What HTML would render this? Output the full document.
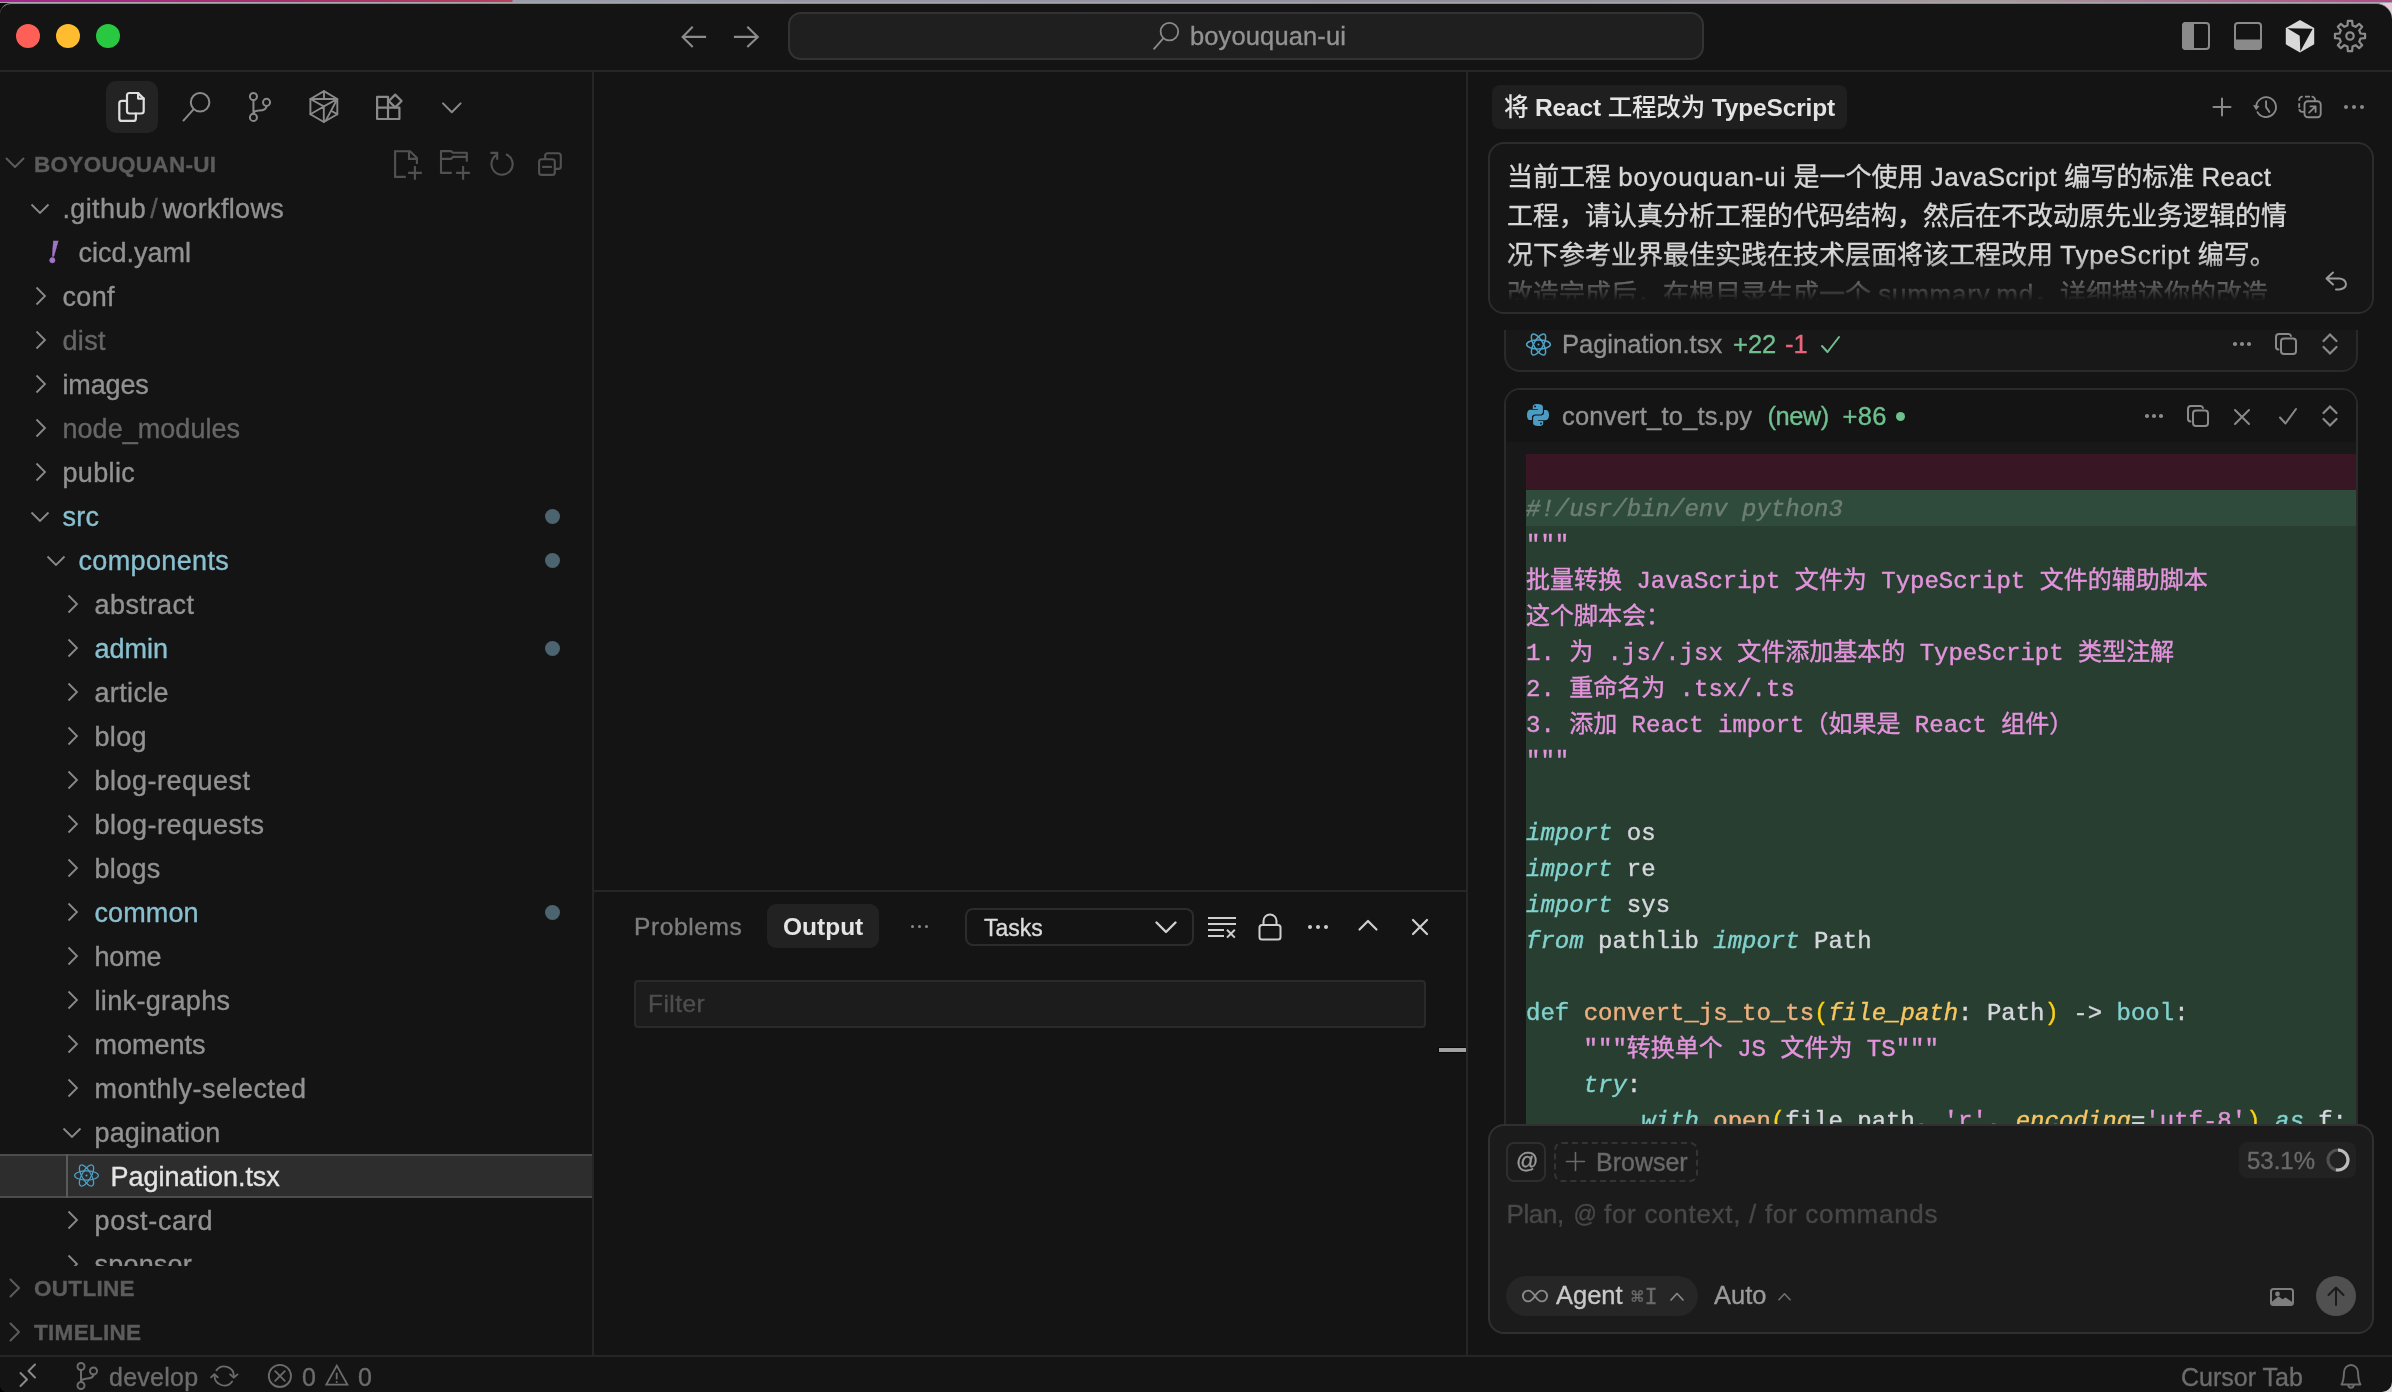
<!DOCTYPE html><html lang="zh"><head><meta charset="utf-8"><title>boyouquan-ui</title><style>
*{box-sizing:border-box;margin:0;padding:0}
html,body{width:2392px;height:1392px;overflow:hidden;background:#141414}
body{position:relative;font-family:"Liberation Sans","Noto Sans CJK SC",sans-serif;color:#9a9a9a;-webkit-font-smoothing:antialiased}
.a{position:absolute}
.t{position:absolute;white-space:pre;line-height:1;-webkit-text-stroke:0.35px}
.mono{font-family:"Liberation Mono","Noto Sans CJK SC",monospace}
svg{position:absolute;overflow:visible}
.row{position:absolute;left:0;width:592px;height:44px}
.cl{position:absolute;left:1526px;white-space:pre;font-family:"Liberation Mono","Noto Sans CJK SC",monospace;font-size:24px;line-height:36px;height:36px;color:#d6d6dd;-webkit-text-stroke:0.4px}
.k{color:#82d2ce;font-style:italic}
.kk{color:#82d2ce}
.s{color:#e394dc}
.f{color:#efb080}
.p{color:#f8c762;font-style:italic}
.y{color:#fbd118}
.c{color:#6d7f72;font-style:italic}
</style></head><body><div id="root" style="position:absolute;left:0;top:0;width:2392px;height:1392px;will-change:transform">
<div class="a" style="left:0px;top:0px;width:2392px;height:3px;background:linear-gradient(90deg,#a3278f 0,#a8306f 300px,#b5405e 512px,#9a9cb0 513px,#8e8e9c 1500px,#a89a9c 2000px,#b04a8a 2392px)"></div>
<div class="a" style="left:0px;top:2px;width:2392px;height:1.5px;background:#a6a6a8;"></div>
<div class="a" style="left:2360px;top:3px;width:32px;height:32px;background:#e6cadc;"></div>
<div class="a" style="left:0px;top:3px;width:40px;height:40px;background:#0c0c0c;"></div>
<div class="a" style="left:0px;top:3px;width:2392px;height:1389px;background:#141414;border-radius:11px 16px 0 0;border-top:1px solid #8a8a8a;border-left:0 solid #8a8a8a"></div>
<svg style="left:2382px;top:1382px" width="10" height="10" viewBox="0 0 10 10" stroke="none"><path d="M10 0 V10 H0 A10 10 0 0 0 10 0Z" fill="#d8d8d8"/></svg>
<svg style="left:0px;top:1386px" width="6" height="6" viewBox="0 0 6 6" stroke="none"><path d="M0 0 V6 H6 A6 6 0 0 1 0 0Z" fill="#000"/></svg>
<div class="a" style="left:0px;top:70px;width:2392px;height:2px;background:#262626;"></div>
<div class="a" style="left:16px;top:24px;width:24px;height:24px;background:#fe5f57;border-radius:50%"></div>
<div class="a" style="left:56px;top:24px;width:24px;height:24px;background:#febc2e;border-radius:50%"></div>
<div class="a" style="left:96px;top:24px;width:24px;height:24px;background:#28c840;border-radius:50%"></div>
<svg style="left:678px;top:22px" width="32" height="30" viewBox="678 22 32 30" fill="none" stroke="#8c8c8c" stroke-width="2.1" stroke-linecap="butt" stroke-linejoin="miter"><path d="M706.100 36.900H683.500M692.700 26.700L682.600 36.900L692.700 47.100"/></svg>
<svg style="left:730px;top:22px" width="32" height="30" viewBox="730 22 32 30" fill="none" stroke="#8c8c8c" stroke-width="2.1" stroke-linecap="butt" stroke-linejoin="miter"><path d="M733.900 36.900H756.900M747.300 26.700L757.800 36.900L747.300 47.100"/></svg>
<div class="a" style="left:788px;top:12px;width:916px;height:48px;background:#1f1f1f;border:2px solid #333;border-radius:13px"></div>
<svg style="left:1150px;top:18px" width="34" height="34" viewBox="1150 18 34 34" fill="none" stroke="#8a8a8a" stroke-width="1.8" stroke-linecap="round" stroke-linejoin="round" ><circle cx="1169.400" cy="31.600" r="8.800"/><path d="M1163.300 38.300L1153.600 49.300" stroke-linecap="butt"/></svg>
<span class="t " style="left:1190px;top:24.2px;font-size:25.5px;color:#929292;letter-spacing:0.12px">boyouquan-ui</span>
<svg style="left:2182px;top:22px" width="28" height="28" viewBox="0 0 28 28" fill="none" stroke="#8a8a8a" stroke-width="2" stroke-linecap="round" stroke-linejoin="round" ><rect x="1" y="1" width="26" height="26" rx="3"/><path d="M1 4a3 3 0 0 1 3-3h7v26H4a3 3 0 0 1-3-3z" fill="#8a8a8a"/></svg>
<svg style="left:2234px;top:22px" width="28" height="28" viewBox="0 0 28 28" fill="none" stroke="#8a8a8a" stroke-width="2" stroke-linecap="round" stroke-linejoin="round" ><rect x="1" y="1" width="26" height="26" rx="3"/><path d="M1 18.500h26v5.500a3 3 0 0 1-3 3H4a3 3 0 0 1-3-3z" fill="#8a8a8a"/></svg>
<svg style="left:2284px;top:18px" width="32" height="36" viewBox="2284 18 32 36" stroke="none"><path d="M2300 19.900L2314.200 28.100V44.300L2300 52.400L2285.800 44.300V28.100z" fill="#d8d8d8"/><path d="M2287.300 28.300L2312.700 28.700L2300.300 51.500L2299.700 35.700z" fill="#141414"/></svg>
<svg style="left:2334px;top:20px" width="32" height="32" viewBox="0 0 32 32" fill="none" stroke="#8c8c8c" stroke-width="2.2" stroke-linecap="round" stroke-linejoin="round" ><path d="M26.50 13.48 L31.05 13.86 L31.05 18.14 L26.50 18.52 L25.21 21.64 L28.16 25.13 L25.13 28.16 L21.64 25.21 L18.52 26.50 L18.14 31.05 L13.86 31.05 L13.48 26.50 L10.36 25.21 L6.87 28.16 L3.84 25.13 L6.79 21.64 L5.50 18.52 L0.95 18.14 L0.95 13.86 L5.50 13.48 L6.79 10.36 L3.84 6.87 L6.87 3.84 L10.36 6.79 L13.48 5.50 L13.86 0.95 L18.14 0.95 L18.52 5.50 L21.64 6.79 L25.13 3.84 L28.16 6.87 L25.21 10.36Z"/><circle cx="16" cy="16" r="3.700"/></svg>
<div class="a" style="left:592px;top:72px;width:2px;height:1284px;background:#262626;"></div>
<div class="a" style="left:106px;top:81px;width:52px;height:52px;background:#232323;border-radius:10px"></div>
<svg style="left:116px;top:90px" width="32" height="34" viewBox="116 90 32 34" fill="none" stroke="#dedede" stroke-width="2.2" stroke-linecap="round" stroke-linejoin="round" ><path d="M129.500 93H138.100L143.700 98.600V111a2.500 2.500 0 0 1-2.500 2.500H129.500a2.500 2.500 0 0 1-2.500-2.500V95.500a2.500 2.500 0 0 1 2.500-2.500z"/><path d="M138.100 93V98.600H143.700"/><path d="M127 100.800H121.800a2.500 2.500 0 0 0-2.500 2.500V118.400a2.500 2.500 0 0 0 2.500 2.500H133.350a2.500 2.500 0 0 0 2.500-2.500V113.500"/></svg>
<svg style="left:180px;top:90px" width="34" height="34" viewBox="180 90 34 34" fill="none" stroke="#8a8a8a" stroke-width="2" stroke-linecap="round" stroke-linejoin="round" ><circle cx="200.100" cy="102.300" r="9.300"/><path d="M193.500 109.400L183 121.200" stroke-linecap="butt"/></svg>
<svg style="left:246px;top:90px" width="28" height="34" viewBox="246 90 28 34" fill="none" stroke="#8a8a8a" stroke-width="2" stroke-linecap="round" stroke-linejoin="round" ><circle cx="253.450" cy="96.500" r="3.550"/><circle cx="253.450" cy="117.400" r="3.550"/><circle cx="266.550" cy="102.350" r="3.550"/><path d="M253.450 100V113.800M266.550 105.900c0 4-4 4.500-7.500 4.600c-3.200 .1-5.500 1.200-5.600 3.300"/></svg>
<svg style="left:308px;top:88px" width="32" height="36" viewBox="308 88 32 36" fill="none" stroke="#8a8a8a" stroke-width="1.9" stroke-linecap="round" stroke-linejoin="round" ><path d="M323.950 91.100L337.300 99V114.200L323.800 122L310.400 114.200V99z"/><path d="M310.400 99H337.300M323.950 91.100V99M310.400 99L323.800 106.450L337.300 99M323.800 106.450V122M323.800 106.450L310.400 114.200M337.300 99L325.800 120.600M331.050 110.760L337.300 114.200"/></svg>
<svg style="left:374px;top:92px" width="30" height="30" viewBox="374 92 30 30" fill="none" stroke="#8a8a8a" stroke-width="2.2" stroke-linecap="round" stroke-linejoin="round" ><path d="M377.100 96.900H388V119H377.100z"/><path d="M377.100 107.700H399.400V119H388"/><path d="M395.200 94.600L401.600 101L395.200 107.400L388.800 101z"/></svg>
<svg style="left:440px;top:100px" width="24" height="16" viewBox="440 100 24 16" fill="none" stroke="#8a8a8a" stroke-width="2" stroke-linecap="round" stroke-linejoin="round" ><path d="M443 103.400L451.800 112.200L460.600 103.400"/></svg>
<svg style="left:5px;top:156px" width="20" height="14" viewBox="0 0 20 14" fill="none" stroke="#5c5c5c" stroke-width="2" stroke-linecap="round" stroke-linejoin="round" ><path d="M1.500 2.500L10 11 18.500 2.500"/></svg>
<span class="t " style="left:34px;top:153.8px;font-size:22.5px;color:#5c5c5c;font-weight:700;letter-spacing:0.3px">BOYOUQUAN-UI</span>
<svg style="left:392px;top:148px" width="32" height="34" viewBox="392 148 32 34" fill="none" stroke="#515151" stroke-width="2.1" stroke-linecap="butt" stroke-linejoin="miter"><path d="M405.800 176.900H395.100V151.200H410.100L416.900 157.900V163.900M409 151.200V158.900H416.900M414.900 166.100V179.700M408.100 172.900H421.900"/></svg>
<svg style="left:438px;top:148px" width="34" height="34" viewBox="438 148 34 34" fill="none" stroke="#515151" stroke-width="2.1" stroke-linejoin="round" stroke-linecap="butt"><path d="M451.800 172.900H441V151.100H451L453.200 152.800H466.800V161.800M466.800 156.900H453.200L451 158.900H441M463.100 166.100V179.700M456.100 172.900H469.900"/></svg>
<svg style="left:488px;top:150px" width="28" height="28" viewBox="488 150 28 28" fill="none" stroke="#515151" stroke-width="2.1" stroke-linecap="butt" stroke-linejoin="miter"><path d="M497 154.750A10.600 10.600 0 1 0 506 154.250"/><path d="M490.400 152.900H497.200V159.700"/></svg>
<svg style="left:536px;top:150px" width="28" height="28" viewBox="536 150 28 28" fill="none" stroke="#515151" stroke-width="2.1" stroke-linejoin="round" stroke-linecap="butt"><rect x="539.100" y="159.300" width="15.700" height="15.600" rx="2.500"/><path d="M542.100 166.900H551.900"/><path d="M545.200 159.300V155.700a2.500 2.500 0 0 1 2.500-2.500H558.300a2.500 2.500 0 0 1 2.500 2.500V166.400a2.500 2.500 0 0 1-2.500 2.500H554.800"/></svg>
<div class="a" style="left:0;top:186px;width:592px;height:1080px;overflow:hidden">
<svg style="left:30px;top:17px" width="20" height="12" viewBox="0 0 20 12" fill="none" stroke="#8a8a8a" stroke-width="1.8" stroke-linecap="butt" stroke-linejoin="miter"><path d="M1.500 1.500L10 10 18.500 1.500"/></svg>
<span class="t " style="left:62.5px;top:9.5px;font-size:27px;color:#929292;letter-spacing:0.35px">.github<span style="color:#5c5c5c;padding:0 4.3px">/</span>workflows</span>
<span class="t " style="left:47px;top:49.0px;font-size:34px;color:#a074c4;font-weight:700;font-style:italic;font-family:'Liberation Serif',serif">!</span>
<span class="t " style="left:78.5px;top:53.5px;font-size:27px;color:#929292;letter-spacing:0px">cicd.yaml</span>
<svg style="left:35px;top:100px" width="12" height="20" viewBox="0 0 12 20" fill="none" stroke="#8a8a8a" stroke-width="1.8" stroke-linecap="butt" stroke-linejoin="miter"><path d="M1.500 1.500L10 10 1.500 18.500"/></svg>
<span class="t " style="left:62.5px;top:97.5px;font-size:27px;color:#929292;letter-spacing:0.35px">conf</span>
<svg style="left:35px;top:144px" width="12" height="20" viewBox="0 0 12 20" fill="none" stroke="#8a8a8a" stroke-width="1.8" stroke-linecap="butt" stroke-linejoin="miter"><path d="M1.500 1.500L10 10 1.500 18.500"/></svg>
<span class="t " style="left:62.5px;top:141.5px;font-size:27px;color:#666666;letter-spacing:0.35px">dist</span>
<svg style="left:35px;top:188px" width="12" height="20" viewBox="0 0 12 20" fill="none" stroke="#8a8a8a" stroke-width="1.8" stroke-linecap="butt" stroke-linejoin="miter"><path d="M1.500 1.500L10 10 1.500 18.500"/></svg>
<span class="t " style="left:62.5px;top:185.5px;font-size:27px;color:#929292;letter-spacing:-0.15px">images</span>
<svg style="left:35px;top:232px" width="12" height="20" viewBox="0 0 12 20" fill="none" stroke="#8a8a8a" stroke-width="1.8" stroke-linecap="butt" stroke-linejoin="miter"><path d="M1.500 1.500L10 10 1.500 18.500"/></svg>
<span class="t " style="left:62.5px;top:229.5px;font-size:27px;color:#666666;letter-spacing:0.04px">node_modules</span>
<svg style="left:35px;top:276px" width="12" height="20" viewBox="0 0 12 20" fill="none" stroke="#8a8a8a" stroke-width="1.8" stroke-linecap="butt" stroke-linejoin="miter"><path d="M1.500 1.500L10 10 1.500 18.500"/></svg>
<span class="t " style="left:62.5px;top:273.5px;font-size:27px;color:#929292;letter-spacing:0.35px">public</span>
<svg style="left:30px;top:325px" width="20" height="12" viewBox="0 0 20 12" fill="none" stroke="#8a8a8a" stroke-width="1.8" stroke-linecap="butt" stroke-linejoin="miter"><path d="M1.500 1.500L10 10 18.500 1.500"/></svg>
<span class="t " style="left:62.5px;top:317.5px;font-size:27px;color:#88c0d0;letter-spacing:0.2px">src</span>
<div class="a" style="left:544.5px;top:323px;width:15px;height:15px;background:#4c6470;border-radius:50%"></div>
<svg style="left:46px;top:369px" width="20" height="12" viewBox="0 0 20 12" fill="none" stroke="#8a8a8a" stroke-width="1.8" stroke-linecap="butt" stroke-linejoin="miter"><path d="M1.500 1.500L10 10 18.500 1.500"/></svg>
<span class="t " style="left:78.5px;top:361.5px;font-size:27px;color:#88c0d0;letter-spacing:0.35px">components</span>
<div class="a" style="left:544.5px;top:367px;width:15px;height:15px;background:#4c6470;border-radius:50%"></div>
<svg style="left:67px;top:408px" width="12" height="20" viewBox="0 0 12 20" fill="none" stroke="#8a8a8a" stroke-width="1.8" stroke-linecap="butt" stroke-linejoin="miter"><path d="M1.500 1.500L10 10 1.500 18.500"/></svg>
<span class="t " style="left:94.5px;top:405.5px;font-size:27px;color:#929292;letter-spacing:0.5px">abstract</span>
<svg style="left:67px;top:452px" width="12" height="20" viewBox="0 0 12 20" fill="none" stroke="#8a8a8a" stroke-width="1.8" stroke-linecap="butt" stroke-linejoin="miter"><path d="M1.500 1.500L10 10 1.500 18.500"/></svg>
<span class="t " style="left:94.5px;top:449.5px;font-size:27px;color:#88c0d0;letter-spacing:0px">admin</span>
<div class="a" style="left:544.5px;top:455px;width:15px;height:15px;background:#4c6470;border-radius:50%"></div>
<svg style="left:67px;top:496px" width="12" height="20" viewBox="0 0 12 20" fill="none" stroke="#8a8a8a" stroke-width="1.8" stroke-linecap="butt" stroke-linejoin="miter"><path d="M1.500 1.500L10 10 1.500 18.500"/></svg>
<span class="t " style="left:94.5px;top:493.5px;font-size:27px;color:#929292;letter-spacing:0.35px">article</span>
<svg style="left:67px;top:540px" width="12" height="20" viewBox="0 0 12 20" fill="none" stroke="#8a8a8a" stroke-width="1.8" stroke-linecap="butt" stroke-linejoin="miter"><path d="M1.500 1.500L10 10 1.500 18.500"/></svg>
<span class="t " style="left:94.5px;top:537.5px;font-size:27px;color:#929292;letter-spacing:0.35px">blog</span>
<svg style="left:67px;top:584px" width="12" height="20" viewBox="0 0 12 20" fill="none" stroke="#8a8a8a" stroke-width="1.8" stroke-linecap="butt" stroke-linejoin="miter"><path d="M1.500 1.500L10 10 1.500 18.500"/></svg>
<span class="t " style="left:94.5px;top:581.5px;font-size:27px;color:#929292;letter-spacing:0.5px">blog-request</span>
<svg style="left:67px;top:628px" width="12" height="20" viewBox="0 0 12 20" fill="none" stroke="#8a8a8a" stroke-width="1.8" stroke-linecap="butt" stroke-linejoin="miter"><path d="M1.500 1.500L10 10 1.500 18.500"/></svg>
<span class="t " style="left:94.5px;top:625.5px;font-size:27px;color:#929292;letter-spacing:0.5px">blog-requests</span>
<svg style="left:67px;top:672px" width="12" height="20" viewBox="0 0 12 20" fill="none" stroke="#8a8a8a" stroke-width="1.8" stroke-linecap="butt" stroke-linejoin="miter"><path d="M1.500 1.500L10 10 1.500 18.500"/></svg>
<span class="t " style="left:94.5px;top:669.5px;font-size:27px;color:#929292;letter-spacing:0.3px">blogs</span>
<svg style="left:67px;top:716px" width="12" height="20" viewBox="0 0 12 20" fill="none" stroke="#8a8a8a" stroke-width="1.8" stroke-linecap="butt" stroke-linejoin="miter"><path d="M1.500 1.500L10 10 1.500 18.500"/></svg>
<span class="t " style="left:94.5px;top:713.5px;font-size:27px;color:#88c0d0;letter-spacing:0.1px">common</span>
<div class="a" style="left:544.5px;top:719px;width:15px;height:15px;background:#4c6470;border-radius:50%"></div>
<svg style="left:67px;top:760px" width="12" height="20" viewBox="0 0 12 20" fill="none" stroke="#8a8a8a" stroke-width="1.8" stroke-linecap="butt" stroke-linejoin="miter"><path d="M1.500 1.500L10 10 1.500 18.500"/></svg>
<span class="t " style="left:94.5px;top:757.5px;font-size:27px;color:#929292;letter-spacing:-0.18px">home</span>
<svg style="left:67px;top:804px" width="12" height="20" viewBox="0 0 12 20" fill="none" stroke="#8a8a8a" stroke-width="1.8" stroke-linecap="butt" stroke-linejoin="miter"><path d="M1.500 1.500L10 10 1.500 18.500"/></svg>
<span class="t " style="left:94.5px;top:801.5px;font-size:27px;color:#929292;letter-spacing:0.35px">link-graphs</span>
<svg style="left:67px;top:848px" width="12" height="20" viewBox="0 0 12 20" fill="none" stroke="#8a8a8a" stroke-width="1.8" stroke-linecap="butt" stroke-linejoin="miter"><path d="M1.500 1.500L10 10 1.500 18.500"/></svg>
<span class="t " style="left:94.5px;top:845.5px;font-size:27px;color:#929292;letter-spacing:0px">moments</span>
<svg style="left:67px;top:892px" width="12" height="20" viewBox="0 0 12 20" fill="none" stroke="#8a8a8a" stroke-width="1.8" stroke-linecap="butt" stroke-linejoin="miter"><path d="M1.500 1.500L10 10 1.500 18.500"/></svg>
<span class="t " style="left:94.5px;top:889.5px;font-size:27px;color:#929292;letter-spacing:0.5px">monthly-selected</span>
<svg style="left:62px;top:941px" width="20" height="12" viewBox="0 0 20 12" fill="none" stroke="#8a8a8a" stroke-width="1.8" stroke-linecap="butt" stroke-linejoin="miter"><path d="M1.500 1.500L10 10 18.500 1.500"/></svg>
<span class="t " style="left:94.5px;top:933.5px;font-size:27px;color:#929292;letter-spacing:0.14px">pagination</span>
<div class="a" style="left:0px;top:968px;width:592px;height:44px;background:#2d2d2d;border-top:2px solid #4c4c4c;border-bottom:2px solid #4c4c4c"></div>
<div class="a" style="left:66px;top:968px;width:2px;height:44px;background:#5a5a5a;"></div>
<svg style="left:73.5px;top:977px" width="25" height="25" viewBox="-12 -12 24 24" fill="none" stroke="#4ba3c9" stroke-width="1.2"><ellipse rx="11.4" ry="4.4"/><ellipse rx="11.4" ry="4.4" transform="rotate(60)"/><ellipse rx="11.4" ry="4.4" transform="rotate(120)"/><circle r="1" fill="#4ba3c9" stroke="none"/></svg>
<span class="t " style="left:110.5px;top:977.5px;font-size:27px;color:#e4e4e4;letter-spacing:-0.02px">Pagination.tsx</span>
<svg style="left:67px;top:1024px" width="12" height="20" viewBox="0 0 12 20" fill="none" stroke="#8a8a8a" stroke-width="1.8" stroke-linecap="butt" stroke-linejoin="miter"><path d="M1.500 1.500L10 10 1.500 18.500"/></svg>
<span class="t " style="left:94.5px;top:1021.5px;font-size:27px;color:#929292;letter-spacing:0.68px">post-card</span>
<svg style="left:67px;top:1068px" width="12" height="20" viewBox="0 0 12 20" fill="none" stroke="#8a8a8a" stroke-width="1.8" stroke-linecap="butt" stroke-linejoin="miter"><path d="M1.500 1.500L10 10 1.500 18.500"/></svg>
<span class="t " style="left:94.5px;top:1065.5px;font-size:27px;color:#929292;letter-spacing:0.2px">sponsor</span>
</div>
<svg style="left:9px;top:1278px" width="12" height="20" viewBox="0 0 12 20" fill="none" stroke="#5c5c5c" stroke-width="2" stroke-linecap="round" stroke-linejoin="round" ><path d="M1.500 1.500L10 10 1.500 18.500"/></svg>
<span class="t " style="left:34px;top:1277.8px;font-size:22.5px;color:#5c5c5c;font-weight:700;letter-spacing:0.3px">OUTLINE</span>
<svg style="left:9px;top:1322px" width="12" height="20" viewBox="0 0 12 20" fill="none" stroke="#5c5c5c" stroke-width="2" stroke-linecap="round" stroke-linejoin="round" ><path d="M1.500 1.500L10 10 1.500 18.500"/></svg>
<span class="t " style="left:34px;top:1321.8px;font-size:22.5px;color:#5c5c5c;font-weight:700;letter-spacing:0.3px">TIMELINE</span>
<div class="a" style="left:0px;top:1355px;width:2392px;height:2px;background:#262626;"></div>
<svg style="left:19px;top:1363px" width="18" height="25" viewBox="0 0 18 25" fill="none" stroke="#8a8a8a" stroke-width="2" stroke-linecap="round" stroke-linejoin="round" ><path d="M8 1.500L16.500 1.500" stroke="none"/><path d="M16 1.500L9.500 8 16 14.500M1.500 10L8 16.500 1.500 23"/></svg>
<svg style="left:76px;top:1362px" width="22" height="28" viewBox="0 0 22 28" fill="none" stroke="#6c6c6c" stroke-width="2" stroke-linecap="round" stroke-linejoin="round" ><circle cx="5" cy="4.500" r="3.500"/><circle cx="5" cy="23.500" r="3.500"/><circle cx="17.500" cy="9" r="3.500"/><path d="M5 8V20M17.500 12.500c0 4-5 4-9 4.500-2.500 .3-3.500 1.500-3.500 3"/></svg>
<span class="t " style="left:109px;top:1364.5px;font-size:25px;color:#6c6c6c;letter-spacing:0.25px">develop</span>
<svg style="left:208px;top:1362px" width="32" height="28" viewBox="208 1362 32 28" fill="none" stroke="#6c6c6c" stroke-width="1.8" stroke-linecap="round" stroke-linejoin="round" ><path d="M216.400 1370.400A9.700 9.700 0 0 1 233.900 1376M232.100 1381.400A9.700 9.700 0 0 1 214.500 1375.800"/><path d="M230.100 1374.400L233.800 1377.700L237.500 1374.400M211 1377.400L214.400 1374.100L217.800 1377.400"/></svg>
<svg style="left:266px;top:1362px" width="28" height="28" viewBox="266 1362 28 28" fill="none" stroke="#6c6c6c" stroke-width="1.8" stroke-linecap="round" stroke-linejoin="round" ><circle cx="279.900" cy="1375.900" r="11.100"/><path d="M275.200 1371.100L284.800 1380.900M284.800 1371.100L275.200 1380.900"/></svg>
<span class="t " style="left:302px;top:1364.5px;font-size:25px;color:#6c6c6c;">0</span>
<svg style="left:322px;top:1362px" width="30" height="26" viewBox="322 1362 30 26" fill="none" stroke="#6c6c6c" stroke-width="1.8" stroke-linecap="round" stroke-linejoin="round" ><path d="M336.800 1365.600L347.400 1384.600H326.300z" stroke-linejoin="miter"/><path d="M336.700 1372.700V1379.400" stroke-linecap="butt"/><circle cx="336.700" cy="1382" r="1" fill="#6c6c6c" stroke="none"/></svg>
<span class="t " style="left:358px;top:1364.5px;font-size:25px;color:#6c6c6c;">0</span>
<span class="t " style="left:2181px;top:1364.5px;font-size:25px;color:#6c6c6c;">Cursor Tab</span>
<svg style="left:2340px;top:1363px" width="22" height="27" viewBox="0 0 22 27" fill="none" stroke="#6c6c6c" stroke-width="1.9" stroke-linecap="round" stroke-linejoin="round" ><path d="M1.500 21.500c2-3 2.300-7 2.500-12a7 7.500 0 0 1 14 0c.2 5 .5 9 2.500 12z"/><path d="M8.300 22a2.700 2.700 0 0 0 5.400 0"/></svg>
<div class="a" style="left:594px;top:890px;width:872px;height:2px;background:#262626;"></div>
<span class="t " style="left:634px;top:914.8px;font-size:24.5px;color:#7e7e7e;letter-spacing:0.6px">Problems</span>
<div class="a" style="left:767px;top:904px;width:112px;height:44px;background:#222;border-radius:9px"></div>
<span class="t " style="left:783px;top:914.8px;font-size:24.5px;color:#e4e4e4;font-weight:700;-webkit-text-stroke:0">Output</span>
<div class="a" style="left:911px;top:925px;width:3px;height:3px;background:#8a8a8a;border-radius:50%"></div>
<div class="a" style="left:918px;top:925px;width:3px;height:3px;background:#8a8a8a;border-radius:50%"></div>
<div class="a" style="left:925px;top:925px;width:3px;height:3px;background:#8a8a8a;border-radius:50%"></div>
<div class="a" style="left:965px;top:908px;width:229px;height:38px;background:#141414;border:2px solid #2c2c2c;border-radius:8px"></div>
<span class="t " style="left:984px;top:916.5px;font-size:23px;color:#dcdcdc;">Tasks</span>
<svg style="left:1155px;top:921px" width="22" height="13" viewBox="0 0 22 13" fill="none" stroke="#cfcfcf" stroke-width="2.4" stroke-linecap="round" stroke-linejoin="round" ><path d="M1.500 1.500L11 11 20.500 1.500"/></svg>
<svg style="left:1206px;top:914px" width="32" height="26" viewBox="1206 914 32 26" fill="none" stroke="#cfcfcf" stroke-width="2" stroke-linecap="round" stroke-linejoin="round" ><path d="M1208 918.100H1236M1208 924H1236M1208 930H1224M1208 936H1224M1227 929.800L1234.800 937.600M1234.800 929.800L1227 937.600" stroke-linecap="butt"/></svg>
<svg style="left:1258px;top:913px" width="24" height="28" viewBox="0 0 24 28" fill="none" stroke="#cfcfcf" stroke-width="2" stroke-linecap="round" stroke-linejoin="round" ><rect x="1.500" y="12" width="21" height="14.500" rx="2.500"/><path d="M5.500 12V8a6.500 6.500 0 0 1 13 0V12"/></svg>
<div class="a" style="left:1308.3px;top:925.3px;width:4px;height:4px;background:#cfcfcf;border-radius:50%"></div>
<div class="a" style="left:1316.3px;top:925.3px;width:4px;height:4px;background:#cfcfcf;border-radius:50%"></div>
<div class="a" style="left:1324.3px;top:925.3px;width:4px;height:4px;background:#cfcfcf;border-radius:50%"></div>
<svg style="left:1358px;top:919px" width="20" height="12" viewBox="0 0 20 12" fill="none" stroke="#cfcfcf" stroke-width="2.2" stroke-linecap="round" stroke-linejoin="round" ><path d="M1.500 10.500L10 2 18.500 10.500"/></svg>
<svg style="left:1412px;top:919px" width="16" height="16" viewBox="0 0 16 16" fill="none" stroke="#cfcfcf" stroke-width="2.2" stroke-linecap="round" stroke-linejoin="round" ><path d="M1 1L15 15M15 1L1 15"/></svg>
<div class="a" style="left:634px;top:980px;width:792px;height:48px;background:#1c1c1c;border:2px solid #2a2a2a;border-radius:4px"></div>
<span class="t " style="left:648px;top:992.2px;font-size:24.5px;color:#4e4e4e;letter-spacing:0.45px">Filter</span>
<div class="a" style="left:1439px;top:1048px;width:27px;height:4px;background:#a2a2a2;box-shadow:0 0 0 1px #070707"></div>
<div class="a" style="left:1466px;top:72px;width:2px;height:1284px;background:#262626;"></div>
<div class="a" style="left:1492px;top:85px;width:355px;height:44px;background:#1f1f1f;border-radius:8px"></div>
<span class="t " style="left:1504px;top:95.8px;font-size:24.5px;color:#e4e4e4;font-weight:700;-webkit-text-stroke:0;letter-spacing:-0.15px"><span style="font-weight:500">将</span> React <span style="font-weight:500">工程改为</span> TypeScript</span>
<svg style="left:2213px;top:98px" width="18" height="18" viewBox="0 0 18 18" fill="none" stroke="#8a8a8a" stroke-width="2" stroke-linecap="round" stroke-linejoin="round" ><path d="M9 0.500V17.500M0.500 9H17.500"/></svg>
<svg style="left:2250px;top:94px" width="30" height="28" viewBox="2250 94 30 28" fill="none" stroke="#8a8a8a" stroke-width="1.85" stroke-linecap="round" stroke-linejoin="round" ><path d="M2256.310 105.290A9.930 9.930 0 1 1 2257.480 112.110"/><path d="M2253 105.100L2259.500 105.900L2256.100 110.300z" fill="#8a8a8a" stroke="none"/><path d="M2266.070 101.250V107.130L2269.400 111.900"/></svg>
<svg style="left:2296px;top:92px" width="28" height="28" viewBox="2296 92 28 28" fill="none" stroke="#8a8a8a" stroke-width="1.85" stroke-linecap="round" stroke-linejoin="round" ><path d="M2315 101.100V99.900a3.300 3.300 0 0 0-3.300-3.300H2302.500a3.300 3.300 0 0 0-3.300 3.300V108.600a3.300 3.300 0 0 0 3.300 3.300H2304.500" stroke-dasharray="6.400 1.500 5.100 2.200 6.100 2.600 4.400 1.500 7.200" stroke-linecap="butt"/><rect x="2304.500" y="101.200" width="16.200" height="16" rx="3.300"/><path d="M2309.100 112.600L2315.400 106.600M2310.400 106.400H2315.600V111.900"/></svg>
<div class="a" style="left:2343.8px;top:104.8px;width:4.5px;height:4.5px;background:#8a8a8a;border-radius:50%"></div>
<div class="a" style="left:2351.8px;top:104.8px;width:4.5px;height:4.5px;background:#8a8a8a;border-radius:50%"></div>
<div class="a" style="left:2359.8px;top:104.8px;width:4.5px;height:4.5px;background:#8a8a8a;border-radius:50%"></div>
<div class="a" style="left:1488px;top:142px;width:886px;height:172px;background:#161616;border:2px solid #2c2c2c;border-radius:16px;overflow:hidden">
<span class="t" style="left:17px;top:19.6px;font-size:26px;color:#d8d8d8">当前工程 <span style="letter-spacing:0.88px">boyouquan-ui</span> 是一个使用 <span style="letter-spacing:0.47px">JavaScript</span> 编写的标准 <span style="letter-spacing:0.4px">React</span></span>
<span class="t" style="left:17px;top:58.7px;font-size:26px;color:#d8d8d8">工程，请认真分析工程的代码结构，然后在不改动原先业务逻辑的情</span>
<span class="t" style="left:17px;top:97.8px;font-size:26px;color:#d8d8d8">况下参考业界最佳实践在技术层面将该工程改用 <span style="letter-spacing:0.74px">TypeScript</span> 编写。</span>
<span class="t" style="left:17px;top:136.9px;font-size:26px;color:#d8d8d8">改造完成后，在根目录生成一个 <span style="letter-spacing:0.74px">summary.md</span>，详细描述你的改造</span>
<div class="a" style="left:0;top:111px;width:882px;height:57px;background:linear-gradient(180deg,rgba(22,22,22,0) 0,rgba(22,22,22,.55) 45%,#161616 80%)"></div>
</div>
<svg style="left:2325px;top:271px" width="23" height="20" viewBox="0 0 23 20" fill="none" stroke="#9a9a9a" stroke-width="2" stroke-linecap="round" stroke-linejoin="round" ><path d="M8 1.500L1.500 7.500 8 13.500M1.500 7.500H14a7 5.500 0 0 1 0 11H11"/></svg>
<div class="a" style="left:1504px;top:330px;width:854px;height:42px;background:#181818;border:2px solid #2a2a2a;border-top:none;border-radius:0 0 16px 16px"></div>
<svg style="left:1526px;top:332px" width="25" height="25" viewBox="-12 -12 24 24" fill="none" stroke="#4fa3c7" stroke-width="1.4"><ellipse rx="11.4" ry="4.4"/><ellipse rx="11.4" ry="4.4" transform="rotate(60)"/><ellipse rx="11.4" ry="4.4" transform="rotate(120)"/><circle r="1" fill="#4fa3c7" stroke="none"/></svg>
<span class="t " style="left:1562px;top:332.2px;font-size:25.5px;color:#929292;">Pagination.tsx</span>
<span class="t " style="left:1733px;top:332.2px;font-size:25.5px;color:#6fc08f;">+22</span>
<span class="t " style="left:1785px;top:332.2px;font-size:25.5px;color:#e8657c;">-1</span>
<svg style="left:1821px;top:336px" width="19" height="17" viewBox="0 0 19 17" fill="none" stroke="#6fc08f" stroke-width="2" stroke-linecap="round" stroke-linejoin="round" ><path d="M1 10L6.500 16 18 1"/></svg>
<div class="a" style="left:2233.2px;top:342.4px;width:3.6px;height:3.6px;background:#8a8a8a;border-radius:50%"></div>
<div class="a" style="left:2240.2px;top:342.4px;width:3.6px;height:3.6px;background:#8a8a8a;border-radius:50%"></div>
<div class="a" style="left:2247.2px;top:342.4px;width:3.6px;height:3.6px;background:#8a8a8a;border-radius:50%"></div>
<svg style="left:2275px;top:333px" width="22" height="22" viewBox="0 0 22 22" fill="none" stroke="#8a8a8a" stroke-width="2" stroke-linecap="round" stroke-linejoin="round" ><rect x="6" y="5.500" width="15" height="15.500" rx="3"/><path d="M3.500 16.500A2.800 2.800 0 0 1 1 13.500V4A3 3 0 0 1 4 1H13.500A2.800 2.800 0 0 1 16 3"/></svg>
<svg style="left:2322px;top:333px" width="16" height="22" viewBox="0 0 16 22" fill="none" stroke="#8a8a8a" stroke-width="2.2" stroke-linecap="round" stroke-linejoin="miter"><path d="M1.500 8L8 1.500 14.500 8M1.500 14L8 20.500 14.500 14"/></svg>
<div class="a" style="left:1504px;top:388px;width:854px;height:760px;background:#181818;border:2px solid #2a2a2a;border-radius:16px 16px 0 0;overflow:hidden"><div class="a" style="left:0;top:0;width:850px;height:52px;background:#141414"></div></div>
<svg style="left:1527px;top:404px" width="22" height="22" viewBox="0 0 22 22" stroke="none"><path d="M10.800 0C5.500 0 5.800 2.300 5.800 2.300V5H11V5.800H3.500S0 5.400 0 10.900c0 5.400 3 5.200 3 5.200H5V13.500s-.1-3 3-3H13s2.900 0 2.900-2.800V3S16.300 0 10.800 0zM8 1.600a.95 .95 0 1 1 0 1.900 .95 .95 0 0 1 0-1.900z" fill="#4b9cc4"/><path d="M11.200 22c5.300 0 5-2.300 5-2.300V17H11v-.8h7.500s3.500 .4 3.500-5.100c0-5.400-3-5.200-3-5.200H17V8.500s.1 3-3 3H9s-2.900 0-2.900 2.800V19S5.700 22 11.200 22zM14 20.400a.95 .95 0 1 1 0-1.900 .95 .95 0 0 1 0 1.900z" fill="#4b9cc4"/></svg>
<span class="t " style="left:1562px;top:404.2px;font-size:25.5px;color:#929292;letter-spacing:0.2px">convert_to_ts.py</span>
<span class="t " style="left:1767.5px;top:404.2px;font-size:25.5px;color:#6fc08f;letter-spacing:-0.5px">(new)</span>
<span class="t " style="left:1842.5px;top:404.2px;font-size:25.5px;color:#6fc08f;letter-spacing:0.4px">+86</span>
<div class="a" style="left:1896px;top:412px;width:9px;height:9px;background:#6fc08f;border-radius:50%"></div>
<div class="a" style="left:2145.2px;top:414.4px;width:3.6px;height:3.6px;background:#8a8a8a;border-radius:50%"></div>
<div class="a" style="left:2152.2px;top:414.4px;width:3.6px;height:3.6px;background:#8a8a8a;border-radius:50%"></div>
<div class="a" style="left:2159.2px;top:414.4px;width:3.6px;height:3.6px;background:#8a8a8a;border-radius:50%"></div>
<svg style="left:2187px;top:405px" width="22" height="22" viewBox="0 0 22 22" fill="none" stroke="#8a8a8a" stroke-width="2" stroke-linecap="round" stroke-linejoin="round" ><rect x="6" y="5.500" width="15" height="15.500" rx="3"/><path d="M3.500 16.500A2.800 2.800 0 0 1 1 13.500V4A3 3 0 0 1 4 1H13.500A2.800 2.800 0 0 1 16 3"/></svg>
<svg style="left:2234px;top:409px" width="16" height="16" viewBox="0 0 16 16" fill="none" stroke="#8a8a8a" stroke-width="2" stroke-linecap="round" stroke-linejoin="round" ><path d="M1 1L15 15M15 1L1 15"/></svg>
<svg style="left:2279px;top:408px" width="18" height="17" viewBox="0 0 18 17" fill="none" stroke="#8a8a8a" stroke-width="2" stroke-linecap="round" stroke-linejoin="round" ><path d="M1 9.500L6.500 15.500 17 1"/></svg>
<svg style="left:2322px;top:405px" width="16" height="22" viewBox="0 0 16 22" fill="none" stroke="#8a8a8a" stroke-width="2.2" stroke-linecap="round" stroke-linejoin="miter"><path d="M1.500 8L8 1.500 14.500 8M1.500 14L8 20.500 14.500 14"/></svg>
<div class="a" style="left:1526px;top:454px;width:830px;height:36px;background:#381624;"></div>
<div class="a" style="left:1526px;top:490px;width:830px;height:36px;background:#2f4b3b;"></div>
<div class="a" style="left:1526px;top:526px;width:830px;height:600px;background:#273e30;"></div>
<div class="a" style="left:0;top:491.5px;width:2356px;height:632.5px;overflow:hidden">
<div class="cl" style="top:0px"><span class="c">#!/usr/bin/env python3</span></div>
<div class="cl" style="top:36px"><span class="s">"""</span></div>
<div class="cl" style="top:72px"><span class="s">批量转换 JavaScript 文件为 TypeScript 文件的辅助脚本</span></div>
<div class="cl" style="top:108px"><span class="s">这个脚本会：</span></div>
<div class="cl" style="top:144px"><span class="s">1. 为 .js/.jsx 文件添加基本的 TypeScript 类型注解</span></div>
<div class="cl" style="top:180px"><span class="s">2. 重命名为 .tsx/.ts</span></div>
<div class="cl" style="top:216px"><span class="s">3. 添加 React import（如果是 React 组件）</span></div>
<div class="cl" style="top:252px"><span class="s">"""</span></div>
<div class="cl" style="top:288px"></div>
<div class="cl" style="top:324px"><span class="k">import</span> os</div>
<div class="cl" style="top:360px"><span class="k">import</span> re</div>
<div class="cl" style="top:396px"><span class="k">import</span> sys</div>
<div class="cl" style="top:432px"><span class="k">from</span> pathlib <span class="k">import</span> Path</div>
<div class="cl" style="top:468px"></div>
<div class="cl" style="top:504px"><span class="kk">def</span> <span class="f">convert_js_to_ts</span><span class="y">(</span><span class="p">file_path</span>: Path<span class="y">)</span> -&gt; <span class="kk">bool</span>:</div>
<div class="cl" style="top:540px">    <span class="s">"""转换单个 JS 文件为 TS"""</span></div>
<div class="cl" style="top:576px">    <span class="k">try</span>:</div>
<div class="cl" style="top:612px">        <span class="k">with</span> <span class="f">open</span><span class="y">(</span>file_path, <span class="s">'r'</span>, <span class="p">encoding</span>=<span class="s">'utf-8'</span><span class="y">)</span> <span class="k">as</span> f:</div>
</div>
<div class="a" style="left:1488px;top:1124px;width:886px;height:210px;background:#1b1b1b;border:2px solid #303030;border-radius:16px"></div>
<div class="a" style="left:1506px;top:1142px;width:40px;height:40px;background:#1b1b1b;border:2px solid #2e2e2e;border-radius:8px"></div>
<span class="t " style="left:1516px;top:1150.0px;font-size:22px;color:#9a9a9a;">@</span>
<div class="a" style="left:1554px;top:1142px;width:144px;height:40px;border:2px dashed #343434;border-radius:8px"></div>
<svg style="left:1566px;top:1152px" width="19" height="19" viewBox="0 0 19 19" fill="none" stroke="#6a6a6a" stroke-width="1.6" stroke-linecap="round" stroke-linejoin="round" ><path d="M9.500 0.500V18.500M0.500 9.500H18.500"/></svg>
<span class="t " style="left:1596px;top:1149.5px;font-size:25px;color:#6a6a6a;">Browser</span>
<div class="a" style="left:2239px;top:1142px;width:117px;height:36px;background:#222;border-radius:8px"></div>
<span class="t " style="left:2247px;top:1149.0px;font-size:24px;color:#6a6a6a;">53.1%</span>
<svg style="left:2326px;top:1148px" width="24" height="24" viewBox="0 0 24 24" fill="none" stroke="#8a8a8a" stroke-width="3" stroke-linecap="round" stroke-linejoin="round" ><circle cx="12" cy="12" r="10" stroke="#505050"/><path d="M12 2A10 10 0 1 1 10 21.800" stroke="#bcbcbc" stroke-linecap="butt"/></svg>
<span class="t " style="left:1506.5px;top:1201.0px;font-size:26px;color:#484848;letter-spacing:-0.4px">Plan,</span>
<span class="t " style="left:1573.5px;top:1203.0px;font-size:23px;color:#484848;">@</span>
<span class="t " style="left:1604px;top:1201.0px;font-size:26px;color:#484848;letter-spacing:0.71px">for context, / for commands</span>
<div class="a" style="left:1506px;top:1276px;width:192px;height:40px;background:#262626;border-radius:20px"></div>
<svg style="left:1521.8px;top:1289px" width="26" height="14" viewBox="0 0 26 14" fill="none" stroke="#8a8a8a" stroke-width="1.9" stroke-linecap="round" stroke-linejoin="round" ><path d="M13 7C10.500 3.200 8.800 1.600 6.300 1.600a5.400 5.400 0 0 0 0 10.800c2.500 0 4.200-1.600 6.700-5.400s4.200-5.400 6.700-5.400a5.400 5.400 0 0 1 0 10.800c-2.500 0-4.200-1.600-6.700-5.400z"/></svg>
<span class="t " style="left:1556px;top:1283.2px;font-size:25.5px;color:#c8c8c8;">Agent</span>
<span class="t " style="left:1631px;top:1286.5px;font-size:21px;color:#6a6a6a;font-family:'DejaVu Sans Mono',monospace;letter-spacing:1px">⌘I</span>
<svg style="left:1669.5px;top:1291.5px" width="14" height="9" viewBox="0 0 14 9" fill="none" stroke="#8a8a8a" stroke-width="1.7" stroke-linecap="round" stroke-linejoin="round" ><path d="M1 8L7 1.500 13 8"/></svg>
<span class="t " style="left:1714px;top:1283.2px;font-size:25.5px;color:#9a9a9a;">Auto</span>
<svg style="left:1778px;top:1291.5px" width="13" height="9" viewBox="0 0 14 9" fill="none" stroke="#707070" stroke-width="1.7" stroke-linecap="round" stroke-linejoin="round" ><path d="M1 8L7 1.500 13 8"/></svg>
<svg style="left:2270px;top:1288px" width="24" height="18" viewBox="0 0 24 18" fill="none" stroke="#7e7e7e" stroke-width="2" stroke-linecap="round" stroke-linejoin="round" ><rect x="1" y="1" width="22" height="16" rx="2.500"/><path d="M2 15L8.500 9.500 12.500 12.500 15.500 10.500 22 15V16H2z" fill="#7e7e7e"/><circle cx="7.500" cy="6" r="1.400" fill="#7e7e7e"/></svg>
<div class="a" style="left:2316px;top:1276px;width:40px;height:40px;background:#505050;border-radius:50%"></div>
<svg style="left:2327px;top:1286px" width="18" height="20" viewBox="0 0 18 20" fill="none" stroke="#1b1b1b" stroke-width="2" stroke-linecap="round" stroke-linejoin="round" ><path d="M9 19V1.500M1.500 9L9 1.500 16.500 9"/></svg>
</div></body></html>
